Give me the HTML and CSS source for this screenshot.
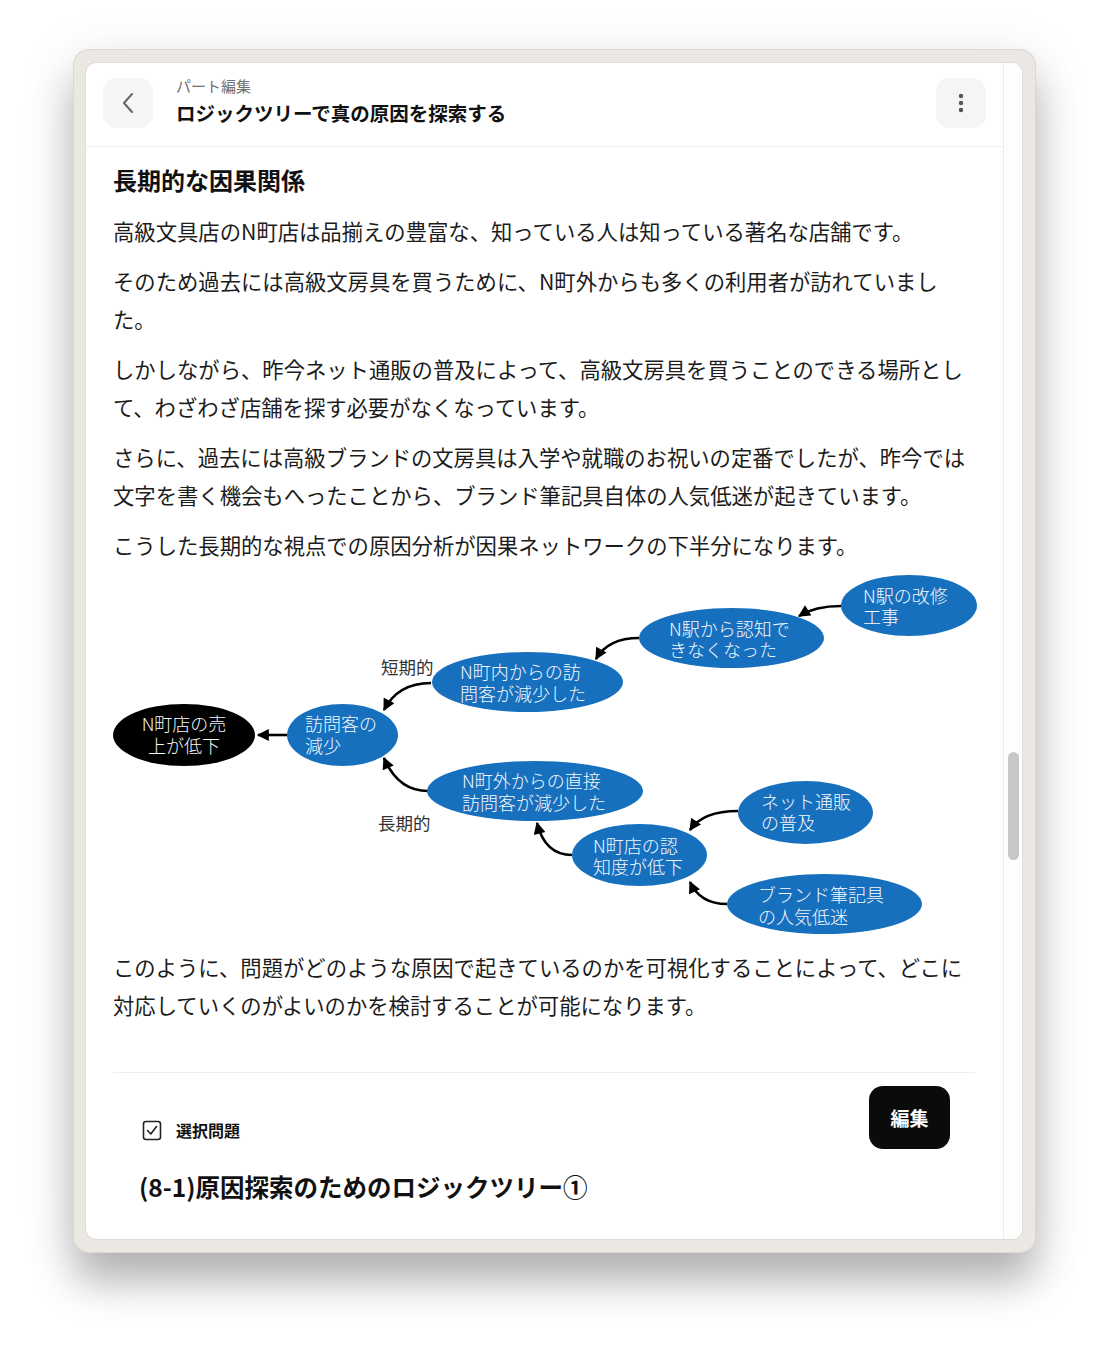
FILE: index.html
```html
<!DOCTYPE html>
<html lang="ja">
<head>
<meta charset="utf-8">
<title>ロジックツリーで真の原因を探索する</title>
<link rel="stylesheet" href="styles.css">
</head>
<body>
<div class="stage">
  <div class="frame">
    <div class="panel">
      <div class="main">
        <header class="header">
          <div class="icon-btn">
            <svg width="14" height="22" viewBox="0 0 14 22"><path d="M11 2 L3 11 L11 20" fill="none" stroke="#666" stroke-width="2" stroke-linecap="round" stroke-linejoin="round"/></svg>
          </div>
          <div class="titles">
            <div class="crumb">パート編集</div>
            <div class="title">ロジックツリーで真の原因を探索する</div>
          </div>
          <div class="icon-btn menu">
            <svg width="6" height="22" viewBox="0 0 6 22"><circle cx="3" cy="4" r="2.2" fill="#555"/><circle cx="3" cy="11" r="2.2" fill="#555"/><circle cx="3" cy="18" r="2.2" fill="#555"/></svg>
          </div>
        </header>
        <section class="content">
          <h2>長期的な因果関係</h2>
          <p>高級文具店のN町店は品揃えの豊富な、知っている人は知っている著名な店舗です。</p>
          <p>そのため過去には高級文房具を買うために、N町外からも多くの利用者が訪れていました。</p>
          <p>しかしながら、昨今ネット通販の普及によって、高級文房具を買うことのできる場所として、わざわざ店舗を探す必要がなくなっています。</p>
          <p>さらに、過去には高級ブランドの文房具は入学や就職のお祝いの定番でしたが、昨今では文字を書く機会もへったことから、ブランド筆記具自体の人気低迷が起きています。</p>
          <p>こうした長期的な視点での原因分析が因果ネットワークの下半分になります。</p>
          <svg class="diagram" width="862" height="360" viewBox="113 577 862 360">
            <defs>
              <marker id="ah" viewBox="0 0 10 10" refX="9" refY="5" markerUnits="userSpaceOnUse" markerWidth="13" markerHeight="12" orient="auto">
                <path d="M0,0 L10,5 L0,10 z" fill="#000"/>
              </marker>
            </defs>
            <g fill="none" stroke="#000" stroke-width="2.6" marker-end="url(#ah)">
              <path d="M287,736 L258,736"/>
              <path d="M431,684 Q398,684 384,711"/>
              <path d="M428,792 Q398,792 384,759"/>
              <path d="M639,639 Q608,639 596,660"/>
              <path d="M841,607 Q815,607 799,617"/>
              <path d="M572,856 Q545,856 537,824"/>
              <path d="M738,812 Q703,812 690,831"/>
              <path d="M727,905 Q700,905 690,883"/>
            </g>
            <ellipse cx="184" cy="736" rx="71" ry="31" fill="#000"/>
            <ellipse cx="342.5" cy="736" rx="55.5" ry="31" class="node"/>
            <ellipse cx="527.5" cy="683" rx="95.5" ry="30" class="node"/>
            <ellipse cx="731.5" cy="639" rx="92.5" ry="30" class="node"/>
            <ellipse cx="909" cy="606.5" rx="68" ry="30.5" class="node"/>
            <ellipse cx="535" cy="792" rx="108" ry="30" class="node"/>
            <ellipse cx="805.5" cy="813.5" rx="67.5" ry="31.5" class="node"/>
            <ellipse cx="639.5" cy="856" rx="67.5" ry="31" class="node"/>
            <ellipse cx="824.5" cy="905" rx="97.5" ry="30" class="node"/>
            <g class="ntext">
              <text text-anchor="middle"><tspan x="184" y="724">N町店の売</tspan><tspan x="184" y="746">上が低下</tspan></text>
              <text><tspan x="305" y="724">訪問客の</tspan><tspan x="305" y="746">減少</tspan></text>
              <text><tspan x="460" y="672">N町内からの訪</tspan><tspan x="460" y="694">問客が減少した</tspan></text>
              <text><tspan x="669" y="629">N駅から認知で</tspan><tspan x="669" y="650">きなくなった</tspan></text>
              <text><tspan x="863" y="596">N駅の改修</tspan><tspan x="863" y="617">工事</tspan></text>
              <text><tspan x="462" y="781">N町外からの直接</tspan><tspan x="462" y="803">訪問客が減少した</tspan></text>
              <text><tspan x="761" y="802">ネット通販</tspan><tspan x="761" y="823">の普及</tspan></text>
              <text><tspan x="593" y="846">N町店の認</tspan><tspan x="593" y="867">知度が低下</tspan></text>
              <text><tspan x="758" y="895">ブランド筆記具</tspan><tspan x="758" y="917">の人気低迷</tspan></text>
            </g>
            <g class="label">
              <text x="381" y="667">短期的</text>
              <text x="378" y="823">長期的</text>
            </g>
          </svg>
          <p>このように、問題がどのような原因で起きているのかを可視化することによって、どこに対応していくのがよいのかを検討することが可能になります。</p>
          <div class="question">
            <div class="q-row">
              <div class="q-type">
                <svg width="20" height="21" viewBox="0 0 20 21"><rect x="1.5" y="1.5" width="17" height="18" rx="2.5" fill="none" stroke="#222" stroke-width="1.6"/><path d="M5.5 10.5 L8.8 14 L14.5 6.5" fill="none" stroke="#222" stroke-width="1.6" stroke-linecap="round" stroke-linejoin="round"/></svg>
                <span>選択問題</span>
              </div>
              <div class="edit-btn">編集</div>
            </div>
            <h3 class="q-title">(8-1)原因探索のためのロジックツリー①</h3>
          </div>
        </section>
      </div>
      <div class="track"><div class="thumb"></div></div>
    </div>
  </div>
</div>
</body>
</html>
```
FILE: styles.css
```css
* { box-sizing: border-box; }
html, body { margin: 0; }
body {
  background: #fff;
  font-family: "Noto Sans CJK JP", "Noto Sans", sans-serif;
  color: #1a1a1a;
  width: 1109px;
  height: 1350px;
  overflow: hidden;
}
.stage { padding: 50px 0 0 74px; }
.frame {
  width: 961px;
  height: 1202px;
  padding: 13px 13px 13px 12px;
  background: #ebe7e2;
  border-radius: 15px;
  box-shadow: 0 0 0 1px #dcd7d1, 0 30px 40px rgba(0,0,0,0.26), 0 10px 60px rgba(0,0,0,0.10);
}
.panel {
  display: flex;
  height: 1176px;
  background: #fff;
  border-radius: 10px;
  overflow: hidden;
  box-shadow: 0 0 0 1px #e0dcd6;
}
.main { width: 917px; flex: none; }
.track { flex: 1; border-left: 1px solid #ececec; background: #fdfdfd; }
.thumb { margin: 689px 0 0 4px; width: 11px; height: 108px; border-radius: 6px; background: #c7c7c7; }

.header {
  display: flex;
  align-items: center;
  height: 84px;
  padding: 15px 17px 18px;
  border-bottom: 1px solid #efefef;
}
.icon-btn {
  width: 50px;
  height: 50px;
  border-radius: 14px;
  background: #f3f5f6;
  display: flex;
  align-items: center;
  justify-content: center;
  flex: none;
}
.menu { margin-left: auto; }
.titles { margin-left: 23px; margin-top: -3px; display: flex; flex-direction: column; gap: 3px; }
.crumb { font-size: 15px; line-height: 20px; color: #707070; }
.title { font-size: 19.5px; line-height: 28px; font-weight: 700; color: #111; }

.content { padding: 16px 28px 0 27px; }
.content h2 { margin: 0 0 15px; font-size: 24px; line-height: 34px; font-weight: 700; color: #111; }
.content p { margin: 0 0 12px; font-size: 21.33px; line-height: 38px; color: #1c1c1c; }
.diagram { display: block; margin: 0 0 12px; overflow: visible; }
.node { fill: #1770be; }
.ntext text { fill: #f4f8fc; font-size: 18px; font-weight: 300; dominant-baseline: central; font-family: "Noto Sans CJK JP", sans-serif; }
.label text { fill: #333; font-size: 17.5px; dominant-baseline: central; font-family: "Noto Sans CJK JP", sans-serif; }

.question { margin-top: 48px; border-top: 1px solid #eeeeee; padding: 13px 25px 0 26px; }
.q-row { display: flex; justify-content: space-between; align-items: flex-start; }
.q-type { display: flex; align-items: center; gap: 14px; margin: 34px 0 0 3px; font-size: 16px; line-height: 21px; font-weight: 700; color: #111; }
.edit-btn {
  width: 81px;
  height: 63px;
  border-radius: 14px;
  background: #0b0b0b;
  color: #fff;
  font-size: 19px;
  font-weight: 700;
  display: flex;
  align-items: center;
  justify-content: center;
}
.q-title { margin: 21px 0 0; font-size: 24.5px; line-height: 34px; font-weight: 700; color: #111; }
```
